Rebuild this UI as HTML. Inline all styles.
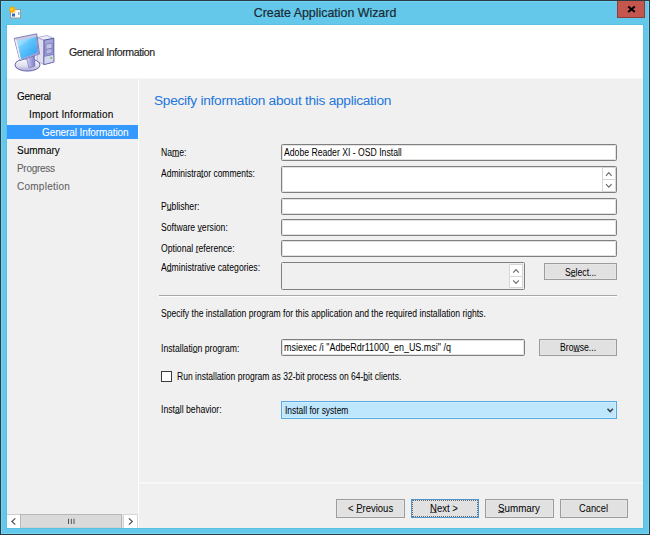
<!DOCTYPE html>
<html><head><meta charset="utf-8">
<style>
*{margin:0;padding:0;box-sizing:border-box}
html,body{width:650px;height:535px;overflow:hidden;background:#fff}
body{position:relative;font-family:"Liberation Sans",sans-serif;color:#000}
.a{position:absolute}
.t{position:absolute;white-space:pre;line-height:1}
#frame{left:0;top:0;width:650px;height:535px;background:#64c8ea;border:1px solid #2d3b45;box-shadow:inset 0 0 0 1px #72d4f4}
#title{left:0;width:650px;top:7px;text-align:center;font-size:12.4px;color:#1c2833;-webkit-text-stroke:0.2px #1c2833}
#close{left:617px;top:1px;width:28px;height:17px;background:#c5564e;border:1px solid #8a3d38;border-top:none}
#hdr{left:7px;top:25px;width:636px;height:54px;background:#fff;border-bottom:1px solid #f7f7f7}
#nav{left:7px;top:79px;width:131px;height:449px;background:#f0f0f0}
#vline{left:138px;top:79px;width:1px;height:449px;background:#fff}
#main{left:139px;top:79px;width:504px;height:449px;background:#f0f0f0}
#hline{left:139px;top:482px;width:504px;height:2px;background:#f7f7f7}
.nav{font-size:10px;color:#000;-webkit-text-stroke:0.08px currentColor}
.dis{color:#626262}
#hl{left:7px;top:125px;width:131px;height:14px;background:#3399ff}
#heading{font-size:13.7px;color:#2276dc;letter-spacing:-0.28px}
.lb{font-size:10px;color:#000;transform:scaleX(0.865);transform-origin:0 0}
.u{text-decoration:underline;text-underline-offset:0px;text-decoration-thickness:1px;text-decoration-color:#5a5a5a}
.box{position:absolute;background:#fff;border:1px solid #7f7f7f;border-radius:1.5px;box-shadow:inset 0 0 0 1px #e2e2e2}
.btn{position:absolute;background:#e1e1e1;border:1px solid #9c9c9c;box-shadow:inset 0 0 0 1px #e6e6e6}
.bt{position:absolute;left:0;top:0;width:100%;text-align:center;white-space:pre;font-size:10px;line-height:1}
.sb{position:absolute;background:#fff;border:1px solid #d6d6d6}
</style></head><body>
<div class="a" id="frame"></div>
<div class="t" id="title">Create Application Wizard</div>
<div class="a" id="close"></div>
<svg class="a" style="left:617px;top:1px" width="28" height="18" viewBox="617 1 28 18">
<path d="M628.2 6.4 L634.8 12.1 M634.8 6.4 L628.2 12.1" stroke="#000" stroke-width="2" fill="none"/>
</svg>
<svg class="a" style="left:6px;top:3px" width="20" height="20" viewBox="6 3 20 20">
<rect x="10.5" y="9.5" width="10" height="8.5" fill="#fafafa" stroke="#9a9a9a" stroke-width="1"/>
<rect x="12" y="13.5" width="3" height="3" fill="#2f6fd0"/>
<rect x="18" y="12" width="1.5" height="3" fill="#7fb0e8"/>
<g stroke="#f7a800" stroke-width="0.9" opacity="0.9">
<path d="M12.3 5.8 V13.8 M8.3 9.8 H16.3 M9.5 7 L15.1 12.6 M15.1 7 L9.5 12.6"/>
</g>
<circle cx="12.3" cy="9.8" r="2.7" fill="#ffad00"/>
<circle cx="11.9" cy="9.3" r="1.3" fill="#ffd040"/>
</svg>
<div class="a" style="left:6px;top:24px;width:638px;height:505px;border:1px solid #5cc0e4"></div>
<div class="a" id="hdr"></div>
<div class="a" id="nav"></div>
<div class="a" id="vline"></div>
<div class="a" id="main"></div>
<div class="a" id="hline"></div>

<svg class="a" style="left:8px;top:28px" width="56" height="48" viewBox="8 28 56 48">
<defs>
<linearGradient id="scr" x1="0" y1="0" x2="1" y2="1">
<stop offset="0" stop-color="#a6e4ff"/><stop offset="0.45" stop-color="#5cc2fa"/><stop offset="1" stop-color="#2a9cf0"/>
</linearGradient>
<linearGradient id="neck" x1="0" y1="0" x2="1" y2="0">
<stop offset="0" stop-color="#d8d8f2"/><stop offset="0.5" stop-color="#a8a8e0"/><stop offset="1" stop-color="#7c7cc4"/>
</linearGradient>
<linearGradient id="base" x1="0" y1="0" x2="0" y2="1">
<stop offset="0" stop-color="#fafafd"/><stop offset="0.55" stop-color="#e2e2f0"/><stop offset="1" stop-color="#a4a4d2"/>
</linearGradient>
</defs>
<polygon points="37,37.5 47,35.5 53.8,38.3 44,40.2" fill="#ececf6" stroke="#8a8ac0" stroke-width="0.6"/>
<polygon points="37,37.5 44,40.2 44,64.5 37,61.5" fill="#dedeee" stroke="#8a8ac0" stroke-width="0.6"/>
<polygon points="44,40.2 53.8,38.3 53.8,62 44,64.5" fill="#a6a6da" stroke="#4c4c9a" stroke-width="0.9"/>
<polygon points="46,44.2 52,43 52,48.4 46,49.6" fill="#c4c4ea" stroke="#6a6aaa" stroke-width="0.6"/>
<polygon points="46,49.6 52,48.4 52,53 46,54.2" fill="#b8b8e4" stroke="#6a6aaa" stroke-width="0.6"/>
<polygon points="44,56.4 53.8,54.4 53.8,62 44,64.5" fill="#d6d6f0" stroke="#5a5aa2" stroke-width="0.6"/>
<circle cx="51.2" cy="58" r="1.1" fill="#5fd040"/>
<ellipse cx="27.5" cy="64.9" rx="12.5" ry="6.2" fill="url(#base)" stroke="#6464ac" stroke-width="1"/>
<polygon points="26.2,57.2 34.7,55.6 34.9,66.3 28.9,68" fill="url(#neck)" stroke="#7070b4" stroke-width="0.6"/>
<polygon points="14.2,38.4 36.7,33.8 39.5,53.9 19.9,60.6" fill="#c8c8e6" stroke="#6a6aae" stroke-width="0.8"/>
<polygon points="14.6,38.7 17,40.7 21.1,59 19.8,60.2" fill="#ededf8"/>
<polygon points="36.5,34.2 39.1,53.8 37.5,52.5 35.8,37" fill="#8c8cca"/>
<polygon points="20.2,60.3 39.1,53.8 37.5,52.5 21.1,59" fill="#9c9cd4"/>
<polygon points="17,40.7 35.8,37 37.5,52.5 21.1,59" fill="url(#scr)"/>
<polygon points="17,40.7 35.8,37 30,39 18.5,47" fill="#ffffff" opacity="0.18"/>
</svg>

<div class="t" style="left:69px;top:47px;font-size:10.6px;color:#1e1e1e;letter-spacing:-0.42px;-webkit-text-stroke:0.15px #1e1e1e">General Information</div>

<div class="a" id="hl"></div>
<div class="t nav" style="left:17px;top:92px;letter-spacing:-0.25px">General</div>
<div class="t nav" style="left:29px;top:110px;letter-spacing:0.18px">Import Information</div>
<div class="t nav" style="left:42px;top:128px;color:#fff;letter-spacing:-0.1px">General Information</div>
<div class="t nav" style="left:17px;top:146px">Summary</div>
<div class="t nav dis" style="left:17px;top:164px;letter-spacing:-0.3px">Progress</div>
<div class="t nav dis" style="left:17px;top:182px;letter-spacing:0.25px">Completion</div>

<div class="t" id="heading" style="left:154px;top:93.6px">Specify information about this application</div>

<div class="t lb" style="left:161px;top:148px">Na<span class="u">m</span>e:</div>
<div class="t lb" style="left:161px;top:169px;transform:scaleX(0.849)">Administra<span class="u">t</span>or comments:</div>
<div class="t lb" style="left:161px;top:202px">P<span class="u">u</span>blisher:</div>
<div class="t lb" style="left:161px;top:223px">Software <span class="u">v</span>ersion:</div>
<div class="t lb" style="left:161px;top:244px">Optional <span class="u">r</span>eference:</div>
<div class="t lb" style="left:161px;top:263px">A<span class="u">d</span>ministrative categories:</div>

<div class="box" style="left:281px;top:144px;width:336px;height:17px"></div>
<div class="t lb" style="left:284px;top:148px">Adobe Reader XI - OSD Install</div>
<div class="box" style="left:281px;top:166px;width:336px;height:27px"></div>
<div class="sb" style="left:602px;top:167px;width:14px;height:13px"></div>
<div class="sb" style="left:602px;top:179px;width:14px;height:13px"></div>
<div class="box" style="left:281px;top:198px;width:336px;height:17px"></div>
<div class="box" style="left:281px;top:219px;width:336px;height:17px"></div>
<div class="box" style="left:281px;top:240px;width:336px;height:17px"></div>
<div class="box" style="left:281px;top:262px;width:244px;height:28px;background:#f0f0f0;box-shadow:none"></div>
<div class="sb" style="left:509px;top:264px;width:14px;height:13px"></div>
<div class="sb" style="left:509px;top:276px;width:14px;height:12px"></div>
<svg class="a" style="left:0;top:0" width="650" height="535" viewBox="0 0 650 535">
<g stroke="#6e6e6e" stroke-width="1.2" fill="none">
<path d="M606 175.8 L608.8 172.7 L611.6 175.8"/>
<path d="M606 184.2 L608.8 187.2 L611.6 184.2"/>
<path d="M513.2 272.7 L516 269.7 L518.8 272.7"/>
<path d="M513.2 280.4 L516 283.4 L518.8 280.4"/>
</g>
</svg>

<div class="btn" style="left:544px;top:263px;width:73px;height:17px"><div class="bt lb" style="left:20px;top:4px;width:auto">S<span class="u">e</span>lect...</div></div>

<div class="a" style="left:159px;top:295px;width:458px;height:2px;background:#a8a8a8;border-bottom:1px solid #fff"></div>

<div class="t lb" style="left:161px;top:309px;transform:scaleX(0.858)">Specify the installation program for this application and the required installation rights.</div>

<div class="t lb" style="left:161px;top:344px">Installati<span class="u">o</span>n program:</div>
<div class="box" style="left:281px;top:339px;width:244px;height:17px"></div>
<div class="t lb" style="left:284px;top:343px;transform:scaleX(0.895)">msiexec /i "AdbeRdr11000_en_US.msi" /q</div>
<div class="btn" style="left:539px;top:339px;width:78px;height:17px"><div class="bt lb" style="left:20px;top:3px;width:auto">Bro<span class="u">w</span>se...</div></div>

<div class="a" style="left:161px;top:371px;width:11px;height:11px;background:#fff;border:1px solid #3a3a3a"></div>
<div class="t lb" style="left:177px;top:372px;transform:scaleX(0.853)">Run installation program as 32-bit process on 64-<span class="u">b</span>it clients.</div>

<div class="t lb" style="left:161px;top:405px">Inst<span class="u">a</span>ll behavior:</div>
<div class="a" style="left:281px;top:401px;width:336px;height:18px;background:#bee6fd;border:1px solid #5aa8e2;box-shadow:inset 0 0 0 1px #cdeefe"></div>
<svg class="a" style="left:600px;top:402px" width="16" height="16" viewBox="600 402 16 16"><path d="M607.5 408.8 L610.2 411.6 L612.9 408.8" stroke="#3c3c3c" stroke-width="1.5" fill="none"/></svg>
<div class="t lb" style="left:285px;top:406px;transform:scaleX(0.845)">Install for system</div>

<div class="btn" style="left:336px;top:499px;width:69px;height:19px"><div class="bt lb" style="left:11px;top:4px;width:auto;transform:scaleX(0.95)">&lt; <span class="u">P</span>revious</div></div>
<div class="btn" style="left:411px;top:499px;width:68px;height:19px;border-color:#4c96d2;box-shadow:none"><div class="a" style="left:0;top:0;width:66px;height:17px;border:1px dotted #6a6a6a"></div><div class="bt lb" style="left:18px;top:4px;width:auto;transform:scaleX(0.955)"><span class="u">N</span>ext &gt;</div></div>
<div class="btn" style="left:485px;top:499px;width:69px;height:19px"><div class="bt lb" style="left:12px;top:4px;width:auto;transform:scaleX(0.98)"><span class="u">S</span>ummary</div></div>
<div class="btn" style="left:560px;top:499px;width:68px;height:19px"><div class="bt lb" style="left:18px;top:4px;width:auto;transform:scaleX(0.93)">Cancel</div></div>

<div class="a" style="left:7px;top:514px;width:131px;height:14px;background:#fff;border-top:1px solid #cdcdcd"></div>
<div class="a" style="left:122px;top:514px;width:2px;height:14px;background:#e6e6e6"></div>
<div class="a" style="left:123px;top:514px;width:15px;height:14px;background:#fff;border:1px solid #d6d6d6;border-bottom:none"></div>
<div class="a" style="left:20px;top:514px;width:102px;height:14px;background:#dadada;border:1px solid #b8b8b8;border-bottom-color:#d0d0d0"></div>
<svg class="a" style="left:0;top:0" width="650" height="535" viewBox="0 0 650 535">
<g stroke="#505050" stroke-width="1.2" fill="none">
<path d="M15.3 518.4 L11.9 521.5 L15.3 524.6"/>
<path d="M128.9 518.4 L132.3 521.5 L128.9 524.6"/>
</g>
<g stroke="#505050" stroke-width="1">
<path d="M68.5 518.8 V524 M71.3 518.8 V524 M74 518.8 V524"/>
</g>
</svg>
</body></html>
